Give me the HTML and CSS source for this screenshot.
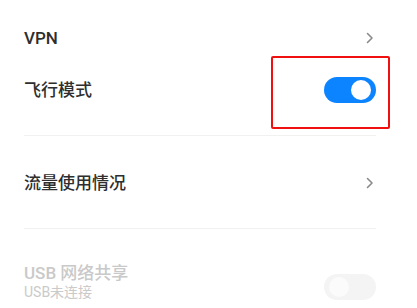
FILE: index.html
```html
<!DOCTYPE html>
<html lang="zh">
<head>
<meta charset="utf-8">
<link rel="stylesheet" href="styles.css">
</head>
<body>
<div class="page">
  <div class="group group-first">
    <div class="row">
      <span class="label">VPN</span>
      <svg class="chev" viewBox="0 0 8 12" width="8" height="12"><polyline points="1.5,1.5 6,6 1.5,10.5" fill="none" stroke="#8a8a8a" stroke-width="1.6" stroke-linecap="round" stroke-linejoin="round"/></svg>
    </div>
    <div class="row">
      <span class="label">飞行模式</span>
      <span class="toggle on"><span class="knob"></span></span>
    </div>
  </div>
  <div class="sep"></div>
  <div class="group group-mid">
    <div class="row">
      <span class="label">流量使用情况</span>
      <svg class="chev" viewBox="0 0 8 12" width="8" height="12"><polyline points="1.5,1.5 6,6 1.5,10.5" fill="none" stroke="#8a8a8a" stroke-width="1.6" stroke-linecap="round" stroke-linejoin="round"/></svg>
    </div>
  </div>
  <div class="sep"></div>
  <div class="group group-last">
    <div class="row row-two">
      <div class="texts">
        <span class="label disabled">USB 网络共享</span>
        <span class="sub">USB未连接</span>
      </div>
      <span class="toggle off"><span class="knob"></span></span>
    </div>
  </div>
  <div class="highlight"></div>
</div>
</body>
</html>
```
FILE: styles.css
```css
html, body {
  margin: 0;
  padding: 0;
  background: #ffffff;
}
body {
  width: 417px;
  height: 308px;
  overflow: hidden;
  font-family: "Roboto", "Noto Sans CJK SC", sans-serif;
}
.page {
  position: relative;
  padding: 0 41px 0 24px;
}
.group-first {
  padding-top: 12px;
  padding-bottom: 19px;
}
.group-mid {
  padding-top: 21px;
  padding-bottom: 19px;
}
.group-last {
  padding-top: 30px;
}
.row {
  height: 52px;
  display: flex;
  align-items: center;
  justify-content: space-between;
}
.row-two {
  height: 44px;
}
.label {
  font-size: 17px;
  font-weight: 500;
  color: #2e2e2e;
  line-height: 20px;
}
.label.disabled {
  color: #c9c9c9;
}
.texts {
  display: flex;
  flex-direction: column;
}
.sub {
  font-size: 14px;
  line-height: 16px;
  color: #cacaca;
  margin-top: 1px;
}
.chev {
  margin-right: 2px;
  display: block;
}
.sep {
  height: 1px;
  background: #f1f1f1;
}
.toggle {
  width: 52px;
  height: 26px;
  border-radius: 13px;
  position: relative;
  display: block;
}
.toggle.on {
  background: #0d84ff;
}
.toggle.off {
  background: #f4f4f4;
  margin-top: 12px;
}
.knob {
  position: absolute;
  top: 3px;
  width: 20px;
  height: 20px;
  border-radius: 50%;
  background: #ffffff;
}
.toggle.on .knob {
  right: 5px;
}
.toggle.off .knob {
  left: 5px;
  background: #fbfbfb;
}
.highlight {
  position: absolute;
  left: 271px;
  top: 56px;
  width: 115px;
  height: 69px;
  border: 2.5px solid #f01010;
  border-radius: 2px;
}
```
